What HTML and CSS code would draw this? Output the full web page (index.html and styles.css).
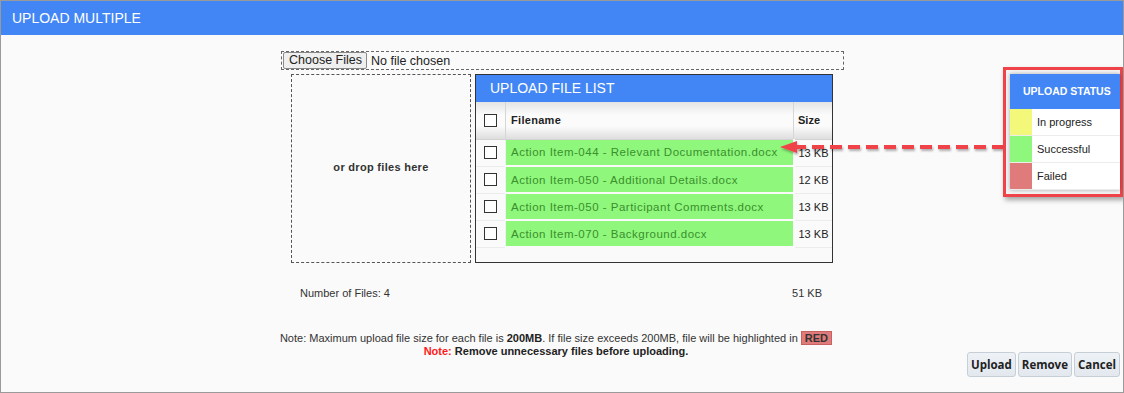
FILE: index.html
```html
<!DOCTYPE html>
<html>
<head>
	<meta charset="utf-8">
	<title>Upload Multiple</title>
	<link rel="stylesheet" href="styles.css">
</head>
<body>
	<div class="dialog">
		<div class="dialog-title">UPLOAD MULTIPLE</div>
		<div class="dialog-body">
			<div class="picker">
				<span class="picker-btn">Choose Files</span>
				<span class="picker-text">No file chosen</span>
			</div>
			<div class="work">
				<div class="drop">or drop files here</div>
				<div class="list">
					<div class="list-title">UPLOAD FILE LIST</div>
					<table class="files">
						<tr class="head">
							<th class="chk"><span class="box"></span></th>
							<th class="name">Filename</th>
							<th class="size">Size</th>
						</tr>
						<tr>
							<td class="chk"><span class="box"></span></td>
							<td class="name ok">Action Item-044 - Relevant Documentation.docx</td>
							<td class="size">13 KB</td>
						</tr>
						<tr>
							<td class="chk"><span class="box"></span></td>
							<td class="name ok">Action Item-050 - Additional Details.docx</td>
							<td class="size">12 KB</td>
						</tr>
						<tr>
							<td class="chk"><span class="box"></span></td>
							<td class="name ok">Action Item-050 - Participant Comments.docx</td>
							<td class="size">13 KB</td>
						</tr>
						<tr>
							<td class="chk"><span class="box"></span></td>
							<td class="name ok">Action Item-070 - Background.docx</td>
							<td class="size">13 KB</td>
						</tr>
					</table>
				</div>
			</div>
			<div class="totals">
				<span>Number of Files: 4</span>
				<span>51 KB</span>
			</div>
			<div class="foot">
				<div class="note">
					<div>Note: Maximum upload file size for each file is <b>200MB</b>. If file size exceeds 200MB, file will be highlighted in <span class="red-tag">RED</span></div>
					<div class="note-2"><span class="warn">Note:</span> Remove unnecessary files before uploading.</div>
				</div>
				<div class="actions">
					<button class="btn">Upload</button>
					<button class="btn">Remove</button>
					<button class="btn">Cancel</button>
				</div>
			</div>
		</div>

		<!-- callout -->
		<svg class="arrow" width="250" height="20" viewBox="0 0 250 20">
			<defs>
				<filter id="sh" x="-10%" y="-50%" width="120%" height="200%">
					<feDropShadow dx="1" dy="2" stdDeviation="1.2" flood-color="#000" flood-opacity="0.3"/>
				</filter>
			</defs>
			<g filter="url(#sh)">
				<line x1="16" y1="9" x2="244" y2="9" stroke="#ef4349" stroke-width="4" stroke-dasharray="12 6"/>
				<polygon points="2,9 19,3 19,15" fill="#ef4349"/>
			</g>
		</svg>
		<div class="status">
			<div class="status-inner">
				<div class="status-title">UPLOAD STATUS</div>
				<div class="status-row"><span class="swatch progress"></span>In progress</div>
				<div class="status-row"><span class="swatch success"></span>Successful</div>
				<div class="status-row"><span class="swatch failed"></span>Failed</div>
			</div>
		</div>
	</div>
</body>
</html>
```

FILE: styles.css
```css
html, body
{
	margin: 0;
	padding: 0;
	background: #fafafa;
	font-family: "Liberation Sans", Arial, sans-serif;
	color: #333;
}
.dialog
{
	position: relative;
	box-sizing: border-box;
	width: 1124px;
	height: 393px;
	border: 1px solid #9a9a9a;
	background: #fafafa;
	overflow: hidden;
}
.dialog-title
{
	height: 34px;
	line-height: 34px;
	padding-left: 11px;
	background: #4286f5;
	color: #fff;
	font-size: 14px;
}
.dialog-body
{
	padding-top: 16px;
}
.picker
{
	box-sizing: border-box;
	width: 563px;
	height: 19px;
	margin-left: 280px;
	border: 1px dashed #666;
	display: flex;
	align-items: center;
	font-size: 12.5px;
	color: #222;
}
.picker-btn
{
	height: 15px;
	line-height: 15px;
	padding: 0 4px 0 5px;
	margin-left: 1px;
	background: #efefef;
	border: 1px solid #8a8a8a;
	border-radius: 2px;
}
.picker-text
{
	margin-left: 4px;
}
.work
{
	display: flex;
	gap: 4px;
	margin: 4px 0 0 290px;
}
.drop
{
	box-sizing: border-box;
	width: 180px;
	height: 189px;
	border: 1px dashed #555;
	display: flex;
	align-items: center;
	justify-content: center;
	padding-bottom: 4px;
	font-size: 11px;
	font-weight: bold;
	letter-spacing: 0.3px;
	color: #333;
}
.list
{
	box-sizing: border-box;
	width: 358px;
	height: 189px;
	border: 1px solid #333;
	background: #fafafa;
}
.list-title
{
	height: 27px;
	line-height: 27px;
	padding-left: 14px;
	background: #4286f5;
	color: #fff;
	font-size: 14px;
}
.files
{
	width: 100%;
	border-collapse: collapse;
	table-layout: fixed;
	font-size: 11px;
}
.files td, .files th
{
	padding: 0;
	border-bottom: 1px solid #ececec;
}
.files tr
{
	height: 27px;
}
.files tr.head
{
	height: 37px;
}
.files th
{
	text-align: left;
	color: #222;
	background: linear-gradient(#e4e4e4, #fbfbfb 35%, #fbfbfb 65%, #dedede);
	border-bottom: 1px solid #d2d2d2;
}
.files .chk
{
	width: 29px;
	text-align: center;
	border-right: 1px solid #d6d6d6;
}
.files td.chk
{
	border-right: 1px solid #f0f0f0;
}
.box
{
	display: inline-block;
	box-sizing: border-box;
	width: 13px;
	height: 13px;
	border: 1px solid #333;
	background: #fff;
	vertical-align: middle;
	margin-top: -2px;
}
.files .name
{
	padding-left: 5px;
	border-right: 1px solid #d6d6d6;
}
.files th.name
{
	letter-spacing: 0.3px;
}
.files td.name
{
	border-right: 2px solid #fafafa;
	border-bottom: 2px solid #fafafa;
	font-size: 11.5px;
	letter-spacing: 0.5px;
	white-space: nowrap;
}
.files .ok
{
	background: #8ef77c;
	color: #3b8f2c;
}
.files .size
{
	width: 34px;
	text-align: left;
	padding-left: 4px;
	color: #222;
	font-size: 11px;
}
.totals
{
	display: flex;
	justify-content: space-between;
	width: 522px;
	margin: 24px 0 0 299px;
	font-size: 11px;
	color: #333;
}
.foot
{
	display: flex;
	align-items: flex-start;
	margin-top: 32px;
	padding-right: 3px;
}
.note
{
	width: 560px;
	margin-left: 275px;
	text-align: center;
	font-size: 11px;
	line-height: 13px;
	color: #333;
}
.note b, .note-2
{
	font-weight: bold;
	color: #222;
}
.red-tag
{
	display: inline-block;
	padding: 0 3px;
	line-height: 12px;
	background: #e07b7b;
	border: 1px solid #c86262;
	font-weight: bold;
	color: #333;
}
.warn
{
	color: #ff1a1a;
}
.actions
{
	display: flex;
	gap: 2px;
	margin-left: auto;
	margin-top: 21px;
}
.btn
{
	height: 25px;
	padding: 0 3px;
	border: 1px solid #c6ced6;
	border-radius: 3px;
	background: linear-gradient(#eef2f6, #e2e8ee);
	font-family: "Open Sans", sans-serif;
	font-size: 11.5px;
	font-weight: bold;
	color: #222;
}
.arrow
{
	position: absolute;
	left: 777px;
	top: 137px;
}
.status
{
	position: absolute;
	left: 1002px;
	top: 66px;
	box-sizing: border-box;
	width: 120px;
	height: 130px;
	padding: 4px 0 3px 4px;
	border: 3px solid #ef4349;
	background: #f4f4f4;
	box-shadow: 2px 3px 5px rgba(0, 0, 0, 0.35);
}
.status-inner
{
	background: #fff;
	box-shadow: 0 0 4px rgba(0, 0, 0, 0.3);
}
.status-title
{
	height: 35px;
	line-height: 35px;
	padding-left: 13px;
	background: #4286f5;
	color: #fff;
	font-size: 10.5px;
	font-weight: bold;
}
.status-row
{
	display: flex;
	align-items: center;
	height: 27px;
	border-bottom: 1px solid #ececec;
	font-size: 11px;
	color: #222;
	box-sizing: border-box;
}
.swatch
{
	width: 22px;
	height: 100%;
	margin-right: 5px;
}
.progress
{
	background: #f3f77a;
}
.success
{
	background: #8ef77c;
}
.failed
{
	background: #e07b7b;
}
```
